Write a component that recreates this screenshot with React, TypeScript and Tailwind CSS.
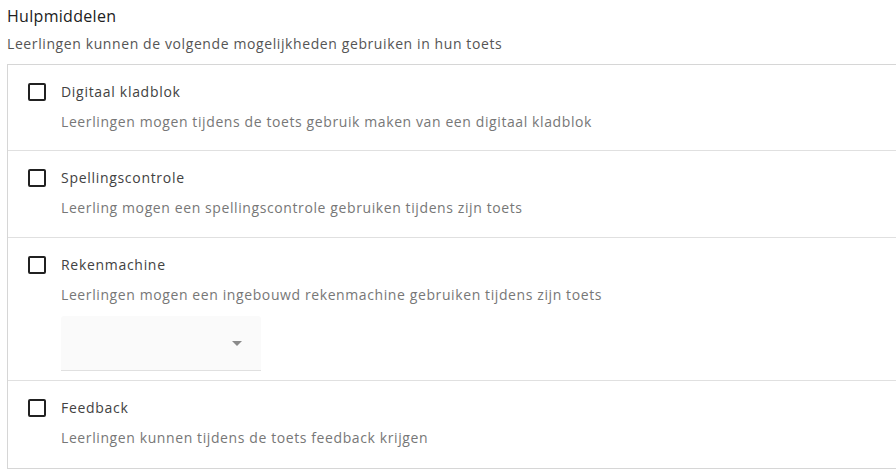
import React from "react";

const items = [
  {
    title: "Digitaal kladblok",
    text: "Leerlingen mogen tijdens de toets gebruik maken van een digitaal kladblok",
  },
  {
    title: "Spellingscontrole",
    text: "Leerling mogen een spellingscontrole gebruiken tijdens zijn toets",
  },
  {
    title: "Rekenmachine",
    text: "Leerlingen mogen een ingebouwd rekenmachine gebruiken tijdens zijn toets",
    select: true,
  },
  {
    title: "Feedback",
    text: "Leerlingen kunnen tijdens de toets feedback krijgen",
  },
];

const App = () => {
  return (
    <div
      className="w-[896px] h-[476px] overflow-hidden bg-white pl-[7px] pt-[6px]"
      style={{ fontFamily: '"Open Sans", "Noto Sans", sans-serif' }}
    >
      <h2 className="text-[16px] font-medium leading-[20px] tracking-[0.3px] text-[#212121]">
        Hulpmiddelen
      </h2>
      <p className="mt-[8px] text-[14px] leading-[20px] tracking-[0.6px] text-[#555555]">
        Leerlingen kunnen de volgende mogelijkheden gebruiken in hun toets
      </p>

      <div className="mt-[10px] border-y border-l border-[#d6d6d6]">
        {items.map((item, i) => (
          <div
            key={item.title}
            className={`flex pl-[20px] pt-[17px] ${
              item.select ? "pb-[9px]" : i === 0 ? "pb-[18px]" : i === 3 ? "pb-[20px]" : "pb-[19px]"
            } ${i > 0 ? "border-t border-[#e0e0e0]" : ""}`}
          >
            <div className="mt-[1px] h-[18px] w-[18px] rounded-[2px] border-2 border-[#212121]" />
            <div className="ml-[15px] flex flex-col">
              <span className="text-[14px] leading-[20px] tracking-[0.7px] text-[#424242]">
                {item.title}
              </span>
              <span className="mt-[10px] text-[14px] leading-[20px] tracking-[0.6px] text-[#777777]">
                {item.text}
              </span>
              {item.select && (
                <div className="mt-[11px] flex h-[55px] w-[200px] items-center justify-end rounded-t-[3px] border-b border-[#e0e0e0] bg-[#fafafa] pr-[19px]">
                  <div className="h-0 w-0 border-x-[5px] border-t-[5px] border-x-transparent border-t-[#8a8a8a]" />
                </div>
              )}
            </div>
          </div>
        ))}
      </div>
    </div>
  );
};

export default App;
